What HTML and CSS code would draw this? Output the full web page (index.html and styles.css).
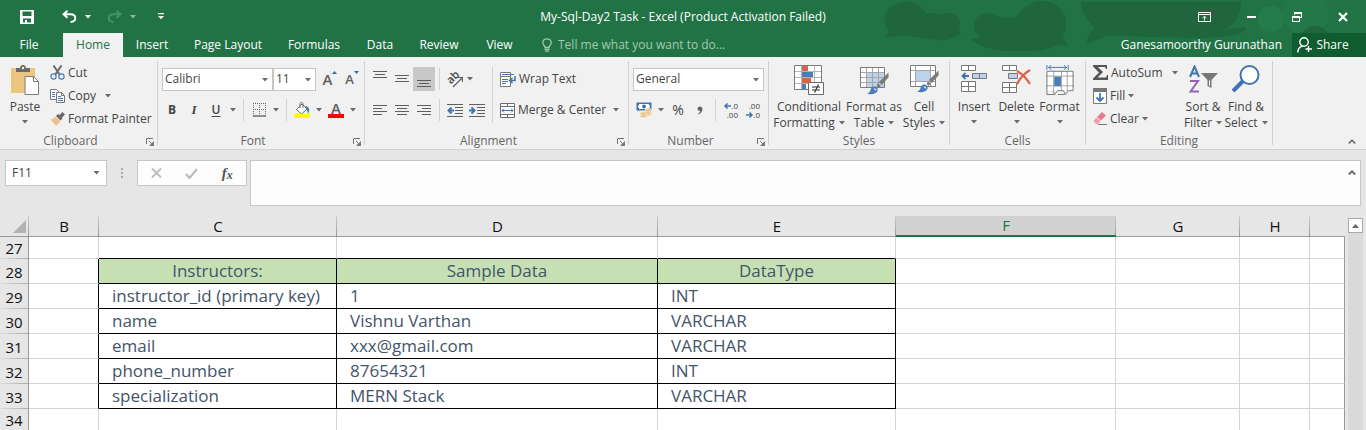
FILE: index.html
```
<!DOCTYPE html>
<html lang="en">
<head>
<meta charset="utf-8">
<title>My-Sql-Day2 Task - Excel</title>
<link rel="stylesheet" href="styles.css">
</head>
<body>
<svg class="defs" width="0" height="0" aria-hidden="true">
  <symbol id="caret" viewBox="0 0 6 4"><path d="M0 0h6L3 3.600z" fill="currentColor"/></symbol>
  <symbol id="launch" viewBox="0 0 8 8"><path d="M.5 6V.5H7M3 3l3 3" fill="none" stroke="#777"/><path d="M8 3v5H3z" fill="#777"/></symbol>
  <symbol id="brush" viewBox="0 0 24 24"><path d="M23.500.5v5l-7 8-3-3z" fill="#7b7b7b"/><path d="M12.500 11.500l3 3-2.500 2-2-2z" fill="#7b7b7b"/><path d="M1 22.500c4-.500 3-5 6-7 3-1.500 6 1 5 4-1 3-6 4.500-11 3z" fill="#4a7ebb"/><path d="M8 17.500c2-1 3 1 2 2z" fill="#fff"/></symbol>
</svg>

<header class="top">
  <svg class="art" width="560" height="57" viewBox="0 0 560 57" aria-hidden="true">
    <g fill="#1f653d">
      <path d="M79 22C78 8 88 2 101 2c10 0 16 6 19 12 6-2 12-1 15 1 8-5 20-1 19 10-1 5-2 7 1 8-4 4-12 8-24 7-18-2-35-7-51-2 0-4 2-6 3-7-3-3-4-6-4-9z"/>
      <path d="M168 26c0-12 14-16 24-9 9 0 16 3 21-3C220 4 229 1 237 1c14 0 25 13 23 26-1 6-4 9-3 11 4 3 5 7 4 9-5-2-8-2-10-2-8 5-20 6-36 6-20 0-36 0-50-12 3 0 7 0 9-2-4-3-6-7-6-11z"/>
      <path d="M275 2h160c0 12-5 22-17 28 5-1 16-2 22-3 0 5-8 8-18 9-20 4-85 0-120 0-9 3-16 5-21 8 0-8 3-12 8-17-8-6-14-15-14-25z"/>
      <path d="M497 57c-6-9-5-21 1-27 8-8 18-4 20 1 14 2 22 10 24 26z"/>
    </g>
    <g fill="#247c4c"><circle cx="465" cy="19" r="13"/><circle cx="500" cy="13" r="23" opacity=".6"/></g>
    <path d="M497 45c-6-11 4-20 14-19 7 1 10 6 9 11l-4 8z" fill="#1f653d"/>
  </svg>
  <div class="titlebar">
    <div class="quick">
      <button aria-label="Save"><svg width="14" height="14" viewBox="0 0 14 14"><path fill="#fff" fill-rule="evenodd" d="M0 0h14v14H0zM2.500 1.500V6h9V1.500zM3 8.500v4h2V10h2v2.500h4v-4z"/></svg></button>
      <button aria-label="Undo"><svg width="15" height="13" viewBox="0 0 15 13" fill="none" stroke="#fff" stroke-width="2"><path d="M5.500.8L1.500 4.300l4 3.500M2 4.300h6.500c3 0 4.800 1.500 4.800 3.900 0 2.300-1.800 3.500-4.800 3.800"/></svg></button>
      <button class="mini" aria-label="Undo list"><svg width="6" height="4"><use href="#caret"/></svg></button>
      <button class="dim" aria-label="Redo"><svg width="15" height="13" viewBox="0 0 15 13" fill="none" stroke="#6fae88" stroke-width="2"><path d="M9.500.8l4 3.500-4 3.500M13 4.300H6.500c-3 0-4.800 1.500-4.800 3.900 0 2.300 1.800 3.500 4.800 3.800"/></svg></button>
      <button class="mini dim" aria-label="Redo list"><svg width="6" height="4"><use href="#caret"/></svg></button>
      <button aria-label="Customize toolbar"><svg width="6" height="7" viewBox="0 0 6 7"><path d="M0 0h6v1.200H0zM0 3h6L3 6.200z" fill="#fff"/></svg></button>
    </div>
    <h1 class="doc">My-Sql-Day2 Task - Excel (Product Activation Failed)</h1>
    <div class="win">
      <button aria-label="Ribbon options"><svg width="13" height="10" viewBox="0 0 13 10" fill="none" stroke="#fff"><path d="M.5.5h12v9H.5zM.5 2.500h12M6.500 8.500V4.500M4.500 6.200l2-2 2 2"/></svg></button>
      <button aria-label="Minimize"><svg width="9" height="2"><path d="M0 0h9v2H0z" fill="#fff"/></svg></button>
      <button aria-label="Restore"><svg width="10" height="10" viewBox="0 0 10 10"><path fill="#fff" fill-rule="evenodd" d="M2 0h8v6H8V5h1V2H3v1H2zM0 4h8v6H0zM1 6v3h6V6z"/></svg></button>
      <button aria-label="Close"><svg width="10" height="10" viewBox="0 0 10 10"><path d="M1 1l8 8M9 1L1 9" stroke="#fff" stroke-width="2.200"/></svg></button>
    </div>
  </div>
  <nav class="tabs">
    <button class="tab file">File</button>
    <button class="tab home">Home</button>
    <button class="tab insert">Insert</button>
    <button class="tab layout">Page Layout</button>
    <button class="tab formulas">Formulas</button>
    <button class="tab data">Data</button>
    <button class="tab review">Review</button>
    <button class="tab view">View</button>
    <label class="tell">
      <svg width="10" height="14" viewBox="0 0 10 14" fill="none" stroke="#a3c9b0" stroke-width="1.300"><path d="M3 9.500C3 7.500.800 7 .8 4.500.8 2.300 2.800.8 5 .8s4.200 1.500 4.200 3.700C9.200 7 7 7.500 7 9.500zM2.500 11.300h5M3 13.200h4"/></svg>
      <input type="text" placeholder="Tell me what you want to do..." aria-label="Tell me what you want to do">
    </label>
    <span class="user">Ganesamoorthy Gurunathan</span>
    <button class="share"><svg width="15" height="16" viewBox="0 0 15 16" fill="none" stroke="#fff" stroke-width="1.400"><circle cx="7" cy="5" r="4.200"/><path d="M.8 15.500c0-3.500 2-5.500 4.500-6.300M11.500 9v6M8.500 12H15"/></svg>Share</button>
  </nav>
</header>

<section class="ribbon">
  <div class="group clipboard">
    <div class="body">
      <button class="big paste"><svg width="28" height="30" viewBox="0 0 28 30"><path d="M0 3h24v25H0z" fill="#ecc67f"/><path d="M5 3h4c0-4 6-4 6 0h4v4H5z" fill="#6b6b6b"/><circle cx="12" cy="3" r="1.200" fill="#f0f0f0"/><path d="M14 11.500h8.500l5 5v13H14z" fill="#fff" stroke="#7b7b7b"/><path d="M22.500 11.500v5h5" fill="none" stroke="#7b7b7b"/></svg><span>Paste</span><svg class="caret" width="6" height="4"><use href="#caret"/></svg></button>
      <div class="list">
        <button class="line"><svg width="15" height="15" viewBox="0 0 15 15" fill="none"><path d="M3.500.5l6.500 9.500M11.500.5L5 10" stroke="#6b6b6b" stroke-width="2"/><circle cx="3.500" cy="11.500" r="2.600" stroke="#4a7ebb" stroke-width="1.200"/><circle cx="11.500" cy="11.500" r="2.600" stroke="#4a7ebb" stroke-width="1.200"/></svg>Cut</button>
        <button class="line"><svg width="15" height="14" viewBox="0 0 15 14"><path d="M.5.5h6l2 2v8h-8z" fill="#fff" stroke="#777"/><path d="M2 3.500h3M2 5.500h3M2 7.500h3" stroke="#4a7ebb"/><path d="M6.500 3.500h5l3 3v7h-8z" fill="#fff" stroke="#777"/><path d="M11.500 3.500v3h3" fill="none" stroke="#777"/><path d="M8 7.500h3M8 9.500h5M8 11.500h5" stroke="#4a7ebb"/></svg>Copy<svg class="caret far" width="6" height="4"><use href="#caret"/></svg></button>
        <button class="line"><svg width="15" height="14" viewBox="0 0 15 14"><path d="M12.500 0L15 2.500l-3 3 .5 1-2 2L6 4l2-2 1.500 1z" fill="#6b6b6b"/><path d="M5.500 4.500l5 5L6 14C4 11 2 9 0 7.500c2 0 4-1 5.500-3z" fill="#ecc08a"/></svg>Format Painter</button>
      </div>
    </div>
    <div class="foot"><span>Clipboard</span><button class="dlg" aria-label="Clipboard settings"><svg width="8" height="8"><use href="#launch"/></svg></button></div>
  </div>

  <div class="group font">
    <div class="body rows">
      <div class="row">
        <span class="combo family"><select aria-label="Font"><option>Calibri</option></select><svg class="caret" width="6" height="4"><use href="#caret"/></svg></span>
        <span class="combo size"><select aria-label="Font size"><option>11</option></select><svg class="caret" width="6" height="4"><use href="#caret"/></svg></span>
        <button class="ic grow" aria-label="Increase font size"><b class="glyph">A</b><svg width="5" height="3" viewBox="0 0 5 3"><path d="M0 3h5L2.500 0z" fill="#2f6db5"/></svg></button>
        <button class="ic shrink" aria-label="Decrease font size"><b class="glyph">A</b><svg width="5" height="3" viewBox="0 0 5 3"><path d="M0 0h5L2.500 3z" fill="#2f6db5"/></svg></button>
      </div>
      <div class="row">
        <button class="ic bold">B</button>
        <button class="ic italic">I</button>
        <button class="ic under">U</button>
        <button class="drop" aria-label="Underline styles"><svg width="6" height="4"><use href="#caret"/></svg></button>
        <i class="sep"></i>
        <button class="ic" aria-label="Borders"><svg width="13" height="14" viewBox="0 0 13 14" fill="none" stroke="#6b6b6b"><path stroke-dasharray="1 1" d="M0 .5h13M0 6.500h13M.5 0v13M6.500 0v13M12.500 0v13"/><path d="M0 13h13" stroke-width="1.500"/></svg></button>
        <button class="drop" aria-label="Border styles"><svg width="6" height="4"><use href="#caret"/></svg></button>
        <i class="sep"></i>
        <button class="ic" aria-label="Fill color"><svg width="16" height="16" viewBox="0 0 16 16"><path d="M2.500 7.500L8 2l5 5-5.500 5z" fill="#fff" stroke="#6b6b6b"/><path d="M6 6V2c0-2 3-2 3 0v4" fill="none" stroke="#6b6b6b"/><path d="M11.500 4c4 1 5 4 2.500 8-.5-3-1-5-2.500-6z" fill="#4a7ebb"/><path d="M0 12h16v4H0z" fill="#ff0"/></svg></button>
        <button class="drop" aria-label="Fill colors"><svg width="6" height="4"><use href="#caret"/></svg></button>
        <button class="ic inkbtn" aria-label="Font color"><b class="glyph">A</b><i class="ink"></i></button>
        <button class="drop" aria-label="Font colors"><svg width="6" height="4"><use href="#caret"/></svg></button>
      </div>
    </div>
    <div class="foot"><span>Font</span><button class="dlg" aria-label="Font settings"><svg width="8" height="8"><use href="#launch"/></svg></button></div>
  </div>

  <div class="group align">
    <div class="body">
      <div class="rows aligns">
        <div class="row">
          <button class="ic tall" aria-label="Top align"><svg width="14" height="16" viewBox="0 0 14 16" stroke="#5f5f5f"><path d="M0 .5h14M2 3.500h10M0 6.500h14"/></svg></button>
          <button class="ic tall" aria-label="Middle align"><svg width="14" height="16" viewBox="0 0 14 16" stroke="#5f5f5f"><path d="M0 4.500h14M2 7.500h10M0 10.500h14"/></svg></button>
          <button class="ic tall on" aria-label="Bottom align" aria-pressed="true"><svg width="14" height="16" viewBox="0 0 14 16" stroke="#5f5f5f"><path d="M0 9.500h14M2 12.500h10M0 15.500h14"/></svg></button>
          <i class="sep"></i>
          <button class="ic" aria-label="Orientation"><span class="ab">ab</span><svg class="slant" width="16" height="16" viewBox="0 0 16 16" fill="none" stroke="#5f5f5f" stroke-width="1.200"><path d="M6 15l9-9M11 5.500h4.500V10"/></svg></button>
          <button class="drop slim" aria-label="Orientations"><svg width="6" height="4"><use href="#caret"/></svg></button>
        </div>
        <div class="row">
          <button class="ic" aria-label="Align left"><svg width="14" height="10" viewBox="0 0 14 10" stroke="#5f5f5f"><path d="M0 .5h14M0 3.500h9M0 6.500h14M0 9.500h9"/></svg></button>
          <button class="ic" aria-label="Center"><svg width="14" height="10" viewBox="0 0 14 10" stroke="#5f5f5f"><path d="M0 .5h14M2 3.500h10M0 6.500h14M2 9.500h10"/></svg></button>
          <button class="ic" aria-label="Align right"><svg width="14" height="10" viewBox="0 0 14 10" stroke="#5f5f5f"><path d="M0 .5h14M5 3.500h9M0 6.500h14M5 9.500h9"/></svg></button>
          <i class="sep"></i>
          <button class="ic" aria-label="Decrease indent"><svg width="16" height="13" viewBox="0 0 16 13" fill="none" stroke="#5f5f5f"><path d="M0 .5h16M8 3.500h8M8 6.500h8M8 9.500h8M0 12.500h16"/><path d="M7 6.500H2M4.500 3.500l-3 3 3 3" stroke="#3f74b3" stroke-width="2"/></svg></button>
          <button class="ic" aria-label="Increase indent"><svg width="16" height="13" viewBox="0 0 16 13" fill="none" stroke="#5f5f5f"><path d="M0 .5h16M8 3.500h8M8 6.500h8M8 9.500h8M0 12.500h16"/><path d="M0 6.500h5M2.500 3.500l3 3-3 3" stroke="#3f74b3" stroke-width="2"/></svg></button>
        </div>
      </div>
      <i class="sep long"></i>
      <div class="rows texts">
        <div class="row"><button class="line"><svg width="16" height="15" viewBox="0 0 16 15" fill="none"><path d="M.5.5h10v14H.5z" fill="#fff" stroke="#777"/><path d="M0 4.500h11" stroke="#777"/><path d="M2 2.500h12M2 7.500h6M2 9.500h6M2 11.500h4" stroke="#3f74b3"/><path d="M15 4v4.500h-4M12.500 6l-3 2.500 3 2.500" stroke="#3f74b3" stroke-width="1.500"/></svg>Wrap Text</button></div>
        <div class="row"><button class="line merge"><svg width="15" height="15" viewBox="0 0 15 15" fill="none"><path d="M.5.5h14v14H.5z" fill="#fff" stroke="#6b6b6b"/><path d="M0 3.500h15M0 11.500h15M7.500 0v3.500M7.500 11.500V15" stroke="#6b6b6b"/><path d="M2 7.500h11M4 5.500l-2 2 2 2M11 5.500l2 2-2 2" stroke="#3f74b3"/></svg>Merge &amp; Center<svg class="caret" width="6" height="4"><use href="#caret"/></svg></button></div>
      </div>
    </div>
    <div class="foot"><span>Alignment</span><button class="dlg" aria-label="Alignment settings"><svg width="8" height="8"><use href="#launch"/></svg></button></div>
  </div>

  <div class="group number">
    <div class="body rows">
      <div class="row"><span class="combo format"><select aria-label="Number format"><option>General</option></select><svg class="caret" width="6" height="4"><use href="#caret"/></svg></span></div>
      <div class="row">
        <button class="ic" aria-label="Accounting format"><svg width="16" height="16" viewBox="0 0 16 16"><path d="M.5.5h15v8H.5z" fill="#3f74b3"/><path d="M3 2h10v1l1 1v1l-1 1v1H3V6L2 5V4l1-1z" fill="#fff"/><circle cx="8" cy="4.500" r="1.900" fill="#3f74b3"/><g fill="#ecc07a" stroke="#f0f0f0" stroke-width=".6"><ellipse cx="12" cy="12" rx="3.500" ry="1.600"/><ellipse cx="12" cy="10" rx="3.500" ry="1.600"/><ellipse cx="12.500" cy="8" rx="3.500" ry="1.600"/><ellipse cx="7.500" cy="14" rx="3.500" ry="1.600"/><ellipse cx="7.500" cy="11.500" rx="3.500" ry="1.600"/></g></svg></button>
        <button class="drop" aria-label="Currencies"><svg width="6" height="4"><use href="#caret"/></svg></button>
        <button class="ic pct">%</button>
        <button class="ic" aria-label="Comma style"><svg width="6" height="9" viewBox="0 0 6 9"><path d="M2.700.5C4.500.5 5.500 1.500 5.500 3c0 2.500-1.500 4.500-4 5.500L1 7.800C2.500 7 3 6 3.200 5 1.500 5.200.5 4 .5 2.800.5 1.500 1.500.5 2.700.5z" fill="#666"/></svg></button>
        <i class="sep"></i>
        <button class="ic dec" aria-label="Increase decimal"><span><svg width="7" height="6" viewBox="0 0 7 6" fill="none" stroke="#3f74b3" stroke-width="1.500"><path d="M7 3H1M3.500.5L1 3l2.500 2.500"/></svg>.0</span><span>.00</span></button>
        <button class="ic dec" aria-label="Decrease decimal"><span>.00</span><span><svg width="7" height="6" viewBox="0 0 7 6" fill="none" stroke="#3f74b3" stroke-width="1.500"><path d="M0 3h6M3.500.5L6 3 3.500 5.500"/></svg>.0</span></button>
      </div>
    </div>
    <div class="foot"><span>Number</span><button class="dlg" aria-label="Number settings"><svg width="8" height="8"><use href="#launch"/></svg></button></div>
  </div>

  <div class="group styles">
    <div class="body">
      <button class="big cond"><svg width="30" height="30" viewBox="0 0 30 30"><path d="M.5.5h27v24H.5z" fill="#fff"/><path d="M8 0h6v6H8zM8 13h9v5.500H8z" fill="#dc6346"/><path d="M8 7h11v5.500H8zM8 19h4v6H8z" fill="#4a7ebb"/><path d="M7.500 0v25M20.500 0v25M0 6.500h28M0 12.500h28M0 18.500h28" stroke="#b5b5b5" fill="none"/><path d="M.5.5h27v24H.5z" fill="none" stroke="#7b7b7b"/><path d="M14.500 17.500h15v12h-15z" fill="#fff" stroke="#6b6b6b"/><path d="M18 22h8M18 25h8M24.500 19.500l-4 8" stroke="#333" stroke-width="1.200"/></svg><span>Conditional</span><span>Formatting<svg class="caret" width="6" height="4"><use href="#caret"/></svg></span></button>
      <button class="big tabl"><svg width="29" height="30" viewBox="0 0 29 30"><path d="M.5 2.500h24v20H.5z" fill="#fff"/><path d="M7 8h18v15H7z" fill="#bdd3ec"/><path d="M0 7.500h25M0 12.500h25M0 17.500h25M6.500 2v21M12.500 2v21M18.500 2v21" stroke="#a5a5a5"/><path d="M.5 2.500h24v20H.5z" fill="none" stroke="#7b7b7b"/><use href="#brush" x="6" y="7" width="23" height="23"/></svg><span>Format as</span><span>Table<svg class="caret" width="6" height="4"><use href="#caret"/></svg></span></button>
      <button class="big cell"><svg width="29" height="30" viewBox="0 0 29 30"><path d="M.5.500h25v21H.5z" fill="#fff"/><path d="M6 5h14v11H6z" fill="#bdd3ec"/><path d="M0 5.500h26M0 16.500h26M5.500 0v22M20.500 0v22" stroke="#a5a5a5"/><path d="M.5.500h25v21H.5z" fill="none" stroke="#7b7b7b"/><use href="#brush" x="6" y="5" width="23" height="23"/></svg><span>Cell</span><span>Styles<svg class="caret" width="6" height="4"><use href="#caret"/></svg></span></button>
    </div>
    <div class="foot"><span>Styles</span></div>
  </div>

  <div class="group cells">
    <div class="body">
      <button class="big ins"><svg width="26" height="30" viewBox="0 0 26 30" fill="#fff" stroke="#777"><path d="M.5.500h14v5H.5zM7.500.5v5M.5 16.500h14v10H.5zM7.500 16.500v10M.5 21.500h14"/><path d="M11.500 8.500h14v5h-14zM18.500 8.500v5" fill="#bdd3ec"/><path d="M8 11H2M4.500 8L1.500 11l3 3" fill="none" stroke="#3f74b3" stroke-width="1.800"/></svg><span>Insert</span><svg class="caret" width="6" height="4"><use href="#caret"/></svg></button>
      <button class="big del"><svg width="29" height="30" viewBox="0 0 29 30" fill="#fff" stroke="#777"><path d="M.5.5h14v5H.5zM7.500.5v5M.5 17.500h14v10H.5zM7.500 17.500v10M.5 22.500h14"/><path d="M6.500 8.500h9v5h-9z" fill="#bdd3ec"/><path d="M15 6c5 3 10 8 13 13M28 5c-5 3-10 8-13 14" fill="none" stroke="#dc6346" stroke-width="2.200"/></svg><span>Delete</span><svg class="caret" width="6" height="4"><use href="#caret"/></svg></button>
      <button class="big fmt"><svg width="28" height="31" viewBox="0 0 28 31" fill="none"><path d="M.5 0v5M22.500 0v5M2 2.500h19M5 0L2.500 2.500 5 5M18 0l2.500 2.500L18 5" stroke="#3f74b3"/><path d="M.5 6.500h27v20H.5z" fill="#fff"/><path d="M7.500 6v21M15.500 6v21M21.500 6v21M0 11.500h28M0 21.500h28" stroke="#a5a5a5"/><path d="M8 12h7v10H8z" fill="#4a7ebb"/><path d="M27.500 26.500V6.500H.5v24h8l3-4h6l2 4 3-4z" stroke="#777"/><path d="M8.500 30.500l-2-4M12 30.500h7" stroke="#777"/></svg><span>Format</span><svg class="caret" width="6" height="4"><use href="#caret"/></svg></button>
    </div>
    <div class="foot"><span>Cells</span></div>
  </div>

  <div class="group edit">
    <div class="body">
      <div class="list">
        <button class="line sum"><svg width="15" height="15" viewBox="0 0 15 15"><path d="M0 0h14v4h-1l-1-2H5l5 5-5.500 5.500H13l1-2.500h1v5H0v-1.500L6 7.500 0 1.500z" fill="#555"/></svg>AutoSum<svg class="caret" width="6" height="4"><use href="#caret"/></svg></button>
        <button class="line"><svg width="14" height="16" viewBox="0 0 14 16" fill="none"><path d="M.5.5h13v15H.5z" fill="#fff" stroke="#777"/><path d="M0 0h14v4H0z" fill="#777"/><path d="M7 5v8M3.500 9.500L7 13l3.500-3.500" stroke="#3f74b3" stroke-width="1.800"/></svg>Fill<svg class="caret" width="6" height="4"><use href="#caret"/></svg></button>
        <button class="line"><svg width="14" height="13" viewBox="0 0 14 13"><path d="M9 0l4 3.500-5 5L4 5z" fill="#e8798f"/><path d="M3.500 5.500l4 3.500L5 12H3L.5 9z" fill="#ee9dac"/><path d="M5 12.500h9" stroke="#777"/></svg>Clear<svg class="caret" width="6" height="4"><use href="#caret"/></svg></button>
      </div>
      <button class="big sort"><svg width="29" height="30" viewBox="0 0 29 30" fill="none"><path d="M1 12L5.500 1.500 10 12M2.500 8.500h6" stroke="#3f74b3" stroke-width="2"/><path d="M1 16h8L1.500 26.500H10" stroke="#9460b8" stroke-width="2"/><path d="M12 8h17l-6.500 7v8l-4-2v-6z" fill="#777"/><path d="M20 15.500v5l1 .5v-5.500z" fill="#fff"/></svg><span>Sort &amp;</span><span>Filter<svg class="caret" width="6" height="4"><use href="#caret"/></svg></span></button>
      <button class="big find"><svg width="28" height="30" viewBox="0 0 28 30" fill="none"><path d="M1 26l10-10" stroke="#3f74b3" stroke-width="4"/><circle cx="17.500" cy="10" r="9" fill="#fff" stroke="#3f74b3" stroke-width="2"/></svg><span>Find &amp;</span><span>Select<svg class="caret" width="6" height="4"><use href="#caret"/></svg></span></button>
    </div>
    <div class="foot"><span>Editing</span></div>
  </div>
  <button class="collapse" aria-label="Collapse ribbon"><svg width="8" height="5" viewBox="0 0 8 5"><path d="M.8 4.500L4 1.300l3.200 3.200" fill="none" stroke="#666" stroke-width="1.600"/></svg></button>
</section>

<section class="formula">
  <span class="combo name"><input type="text" value="F11" aria-label="Name box"><svg class="caret" width="7" height="4"><use href="#caret"/></svg></span>
  <svg class="dots" width="2" height="10" viewBox="0 0 2 10"><path d="M0 0h2v2H0zM0 4h2v2H0zM0 8h2v2H0z" fill="#aaa"/></svg>
  <div class="fxbox">
    <button aria-label="Cancel"><svg width="11" height="10" viewBox="0 0 11 10"><path d="M1 .5l9 9M10 .5l-9 9" stroke="#bcbcbc" stroke-width="1.800"/></svg></button>
    <button aria-label="Enter"><svg width="13" height="11" viewBox="0 0 13 11"><path d="M1 6l3.500 4L12 1" fill="none" stroke="#bcbcbc" stroke-width="2.200"/></svg></button>
    <button class="fx" aria-label="Insert function"><i>f</i><i class="x">x</i></button>
  </div>
  <div class="bar"><input type="text" aria-label="Formula"><svg width="8" height="5" viewBox="0 0 8 5"><path d="M.8 4.500L4 1.300l3.200 3.200" fill="none" stroke="#666" stroke-width="1.800"/></svg></div>
</section>

<main class="sheet">
  <table class="grid">
    <colgroup><col class="c0"><col class="cb"><col class="cc"><col class="cd"><col class="ce"><col class="cf"><col class="cg"><col class="ch"><col></colgroup>
    <thead>
      <tr><th class="corner"><svg width="13" height="13" viewBox="0 0 13 13"><path d="M13 0v13H0z" fill="#b2b2b2"/></svg></th><th>B</th><th>C</th><th>D</th><th>E</th><th class="sel">F</th><th>G</th><th>H</th><th class="last"></th></tr>
    </thead>
    <tbody>
      <tr class="pre"><th>27</th><td></td><td class="k"></td><td class="k"></td><td class="k"></td><td></td><td></td><td></td><td></td></tr>
      <tr class="rec head"><th>28</th><td class="edge"></td><td>Instructors:</td><td>Sample Data</td><td>DataType</td><td></td><td></td><td></td><td></td></tr>
      <tr class="rec"><th>29</th><td class="edge"></td><td>instructor_id (primary key)</td><td>1</td><td>INT</td><td></td><td></td><td></td><td></td></tr>
      <tr class="rec"><th>30</th><td class="edge"></td><td>name</td><td>Vishnu Varthan</td><td>VARCHAR</td><td></td><td></td><td></td><td></td></tr>
      <tr class="rec"><th>31</th><td class="edge"></td><td>email</td><td>xxx@gmail.com</td><td>VARCHAR</td><td></td><td></td><td></td><td></td></tr>
      <tr class="rec"><th>32</th><td class="edge"></td><td>phone_number</td><td>87654321</td><td>INT</td><td></td><td></td><td></td><td></td></tr>
      <tr class="rec"><th>33</th><td class="edge"></td><td>specialization</td><td>MERN Stack</td><td>VARCHAR</td><td></td><td></td><td></td><td></td></tr>
      <tr class="pre end"><th>34</th><td></td><td></td><td></td><td></td><td></td><td></td><td></td><td></td></tr>
    </tbody>
  </table>
  <div class="scroll"><button aria-label="Scroll up"><svg width="7" height="4" viewBox="0 0 7 4"><path d="M0 4h7L3.500 0z" fill="#666"/></svg></button></div>
</main>
</body>
</html>
```
FILE: styles.css
```
* { box-sizing: border-box; }
html, body { height: 100%; }
body {
  margin: 0;
  display: flex;
  flex-direction: column;
  overflow: hidden;
  background: #e6e6e6;
  color: #444;
  font: 12px/16px "Open Sans", "Noto Sans", sans-serif;
}
button, input, select { font: inherit; color: inherit; border: 0; padding: 0; margin: 0; background: none; }
button { display: flex; align-items: center; justify-content: center; white-space: nowrap; }
svg { display: block; flex: none; }
.defs { position: absolute; }
.caret, .drop { color: #6b6b6b; }

/* Title bar and tabs */
.top { position: relative; flex: none; background: #217346; color: #fff; }
.art { position: absolute; right: 0; top: 0; }
.titlebar { position: relative; display: grid; grid-template-columns: 1fr auto 1fr; height: 33px; align-items: center; }
.quick { display: flex; align-items: center; padding-left: 20px; }
.quick button { margin-right: 28px; }
.quick button:nth-child(2), .quick button:nth-child(4) { margin-right: 8px; }
.quick .mini { margin-right: 16px; }
.quick .mini.dim { margin-right: 22px; }
.dim { opacity: .5; }
.doc { margin: 0; font-size: 12px; font-weight: 400; }
.win { display: flex; justify-content: flex-end; gap: 36px; padding-right: 18px; }
.tabs { position: relative; display: flex; height: 24px; }
.tab { flex: none; }
.tab.file { width: 58px; margin-right: 5px; }
.tab.home { width: 60px; background: #f1f1f1; color: #217346; }
.tab.insert { width: 58px; }
.tab.layout { width: 94px; }
.tab.formulas { width: 78px; }
.tab.data { width: 54px; }
.tab.review { width: 64px; }
.tab.view { width: 57px; }
.tell { display: flex; align-items: center; gap: 6px; margin-left: 14px; flex: 1; }
.tell input { width: 200px; outline: 0; }
.tell input::placeholder { color: #a3c9b0; opacity: 1; }
.user { align-self: center; margin-right: 10px; }
.share { gap: 4px; width: 74px; padding-right: 12px; background: #0e5c2f; }

/* Ribbon */
.ribbon { flex: none; display: flex; padding: 4px 0; background: #f1f1f1; border-bottom: 1px solid #d2d2d2; }
.group { flex: none; display: flex; flex-direction: column; border-right: 1px solid #d2d2d2; }
.clipboard { width: 158px; }
.font { width: 207px; }
.align { width: 264px; }
.number { width: 140px; }
.styles { width: 181px; }
.cells { width: 136px; }
.edit { width: 187px; }
.body { display: flex; height: 72px; }
.foot { position: relative; height: 12px; text-align: center; color: #666; padding-right: 16px; }
.styles .foot, .cells .foot, .edit .foot { padding-right: 0; }
.dlg { position: absolute; right: 3px; top: 5px; }
.rows { flex-direction: column; gap: 1px; padding-top: 3px; }
.row { display: flex; align-items: center; height: 30px; }
.row + .row { margin-top: 1px; }
.body.rows .row + .row { margin-top: 0; }
.list { display: flex; flex-direction: column; }
.line { height: 23px; gap: 3px; justify-content: flex-start; }
.line .far { margin-left: 6px; }
.big { flex-direction: column; justify-content: flex-start; padding-top: 4px; }
.big > svg:first-child { margin-bottom: 4px; height: 30px; }
.big > span { display: flex; align-items: center; gap: 4px; }
.big > .caret { margin-top: 5px; }
.paste { width: 50px; }
.combo { position: relative; display: flex; background: #fff; border: 1px solid #c6c6c6; height: 23px; }
.combo select, .combo input { appearance: none; width: 100%; outline: 0; padding-left: 2px; }
.combo .caret { position: absolute; right: 4px; top: 9px; pointer-events: none; }
.family { width: 111px; margin-left: 1px; }
.size { width: 43px; }
.font .rows { padding-left: 3px; }
.ic { width: 22px; height: 22px; position: relative; flex: none; }
.tall { height: 24px; }
.on { background: #c8c8c8; }
.drop { width: 12px; height: 22px; }
.drop.slim { width: 8px; }
.sep { flex: none; width: 1px; height: 22px; margin: 0 4px; background: #d2d2d2; }
.sep.long { height: 56px; margin-top: 6px; }
.glyph { font-weight: 600; font-size: 15px; color: #5f5f5f; }
.grow, .shrink { align-items: flex-start; padding-top: 3px; }
.grow { margin-left: 3px; }
.shrink .glyph { font-size: 13px; }
.inkbtn .glyph { font-size: 15px; line-height: 12px; margin-bottom: 4px; }
.ink { position: absolute; left: 3px; right: 3px; bottom: 3px; height: 4px; background: #f00; }
.bold { font-weight: 700; }
.italic { font: italic 700 13px "Liberation Serif", serif; }
.under { font-weight: 600; text-decoration: underline; text-underline-offset: 2px; }
.align .body { padding-left: 4px; }
.aligns { width: 119px; }
.texts { padding-left: 3px; }
.ab { font-size: 11px; font-weight: 600; transform: rotate(-45deg); margin: 0 4px 4px 0; }
.slant { position: absolute; left: 3px; top: 4px; }
.merge .caret { margin-left: 4px; }
.number .rows { padding-left: 4px; }
.format { width: 131px; }
.pct { font-size: 14px; }
.dec { flex-direction: column; align-items: stretch; font-size: 8px; line-height: 9px; }
.dec span { display: flex; justify-content: flex-end; align-items: center; padding-right: 4px; }
.styles .body { padding-left: 2px; }
.cond { width: 76px; }
.tabl { width: 54px; }
.cell { width: 46px; }
.cells .body { padding-left: 3px; }
.ins { width: 42px; }
.del { width: 43px; }
.fmt { width: 43px; }
.edit .list { width: 96px; padding-left: 7px; }
.sum .caret { margin-left: 6px; }
.sort { width: 42px; }
.find { width: 44px; }
.collapse { margin: 77px 10px 0 auto; height: 6px; }

/* Formula bar */
.formula { flex: none; display: flex; align-items: flex-start; padding: 10px 5px; }
.name { width: 102px; height: 26px; }
.combo.name input { padding-left: 6px; }
.name .caret { right: 6px; top: 10px; }
.dots { margin: 8px 14px 0; }
.fxbox { display: flex; width: 110px; height: 26px; padding: 0 1px; background: #fdfdfd; border: 1px solid #c6c6c6; margin-right: 3px; }
.fxbox button { flex: 1; }
.fx { font: italic 700 15px/16px "Liberation Serif", serif; color: #555; }
.fx .x { font-size: 12px; padding-top: 3px; }
.bar { flex: 1; display: flex; height: 46px; background: #fdfdfd; border: 1px solid #c6c6c6; padding: 9px 4px; }
.bar input { flex: 1; outline: 0; }

/* Sheet */
.sheet { flex: 1; min-height: 0; display: flex; overflow: hidden; }
.grid { flex: 1; table-layout: fixed; border-collapse: separate; border-spacing: 0; width: 0; font-size: 17px; }
.c0 { width: 29px; }
.cb { width: 70px; }
.cc { width: 238px; }
.cd { width: 321px; }
.ce { width: 238px; }
.cf { width: 220px; }
.cg { width: 124px; }
.ch { width: 70px; }
th { padding: 0; font-weight: 400; font-size: 15px; line-height: 20px; color: #111; }
thead th { height: 21px; line-height: 19px; border-bottom: 1px solid #999; background: linear-gradient(#ccc, #999) right / 1px 100% no-repeat; }
thead .sel { border-bottom: 2px solid #217346; color: #217346; background-color: #d2d2d2; }
thead .last { background: none; }
.corner svg { margin: 2px 3px 2px auto; }
tbody th { border-right: 1px solid #999; background: linear-gradient(90deg, #ddd, #aaa) bottom / 100% 1px no-repeat; }
td { padding: 0 0 0 13px; height: 25px; line-height: 24px; background: #fff; border-right: 1px solid #d4d4d4; border-bottom: 1px solid #d4d4d4; color: #44546a; white-space: nowrap; }
td:last-child { border-right-color: #999; }
.pre td { height: 22px; line-height: 21px; }
.k { border-bottom-color: #000; }
.edge { border-right-color: #000; }
.rec td:nth-child(n+3):nth-child(-n+5) { border-right-color: #000; border-bottom-color: #000; }
.head td:nth-child(n+3):nth-child(-n+5) { background: #c6e0b4; text-align: center; padding: 0; }
.scroll { width: 15px; margin: 2px 3px 0; background: #dadada; }
.scroll button { width: 15px; height: 15px; background: #fff; border: 1px solid #aaa; }
```
